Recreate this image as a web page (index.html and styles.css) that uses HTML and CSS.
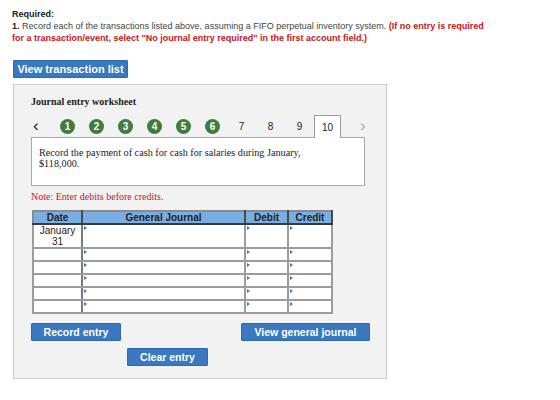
FILE: index.html
```html
<!DOCTYPE html>
<html lang="en">
<head>
    <meta charset="UTF-8">
    <title>Journal entry worksheet</title>
    <link rel="stylesheet" href="styles.css">
</head>
<body>
    <div class="required">
        <div class="req-title">Required:</div>
        <p><b>1.</b> Record each of the transactions listed above, assuming a FIFO perpetual inventory system. <span class="req-note">(If no entry is required</span><br><span class="req-note">for a transaction/event, select "No journal entry required" in the first account field.)</span></p>
    </div>

    <button class="btn btn-list">View transaction list</button>

    <div class="worksheet">
        <div class="ws-title">Journal entry worksheet</div>

        <div class="steps">
            <span class="step-arrow prev">&lsaquo;</span>
            <span class="step"><span class="dot">1</span></span>
            <span class="step"><span class="dot">2</span></span>
            <span class="step"><span class="dot">3</span></span>
            <span class="step"><span class="dot">4</span></span>
            <span class="step"><span class="dot">5</span></span>
            <span class="step"><span class="dot">6</span></span>
            <span class="step">7</span>
            <span class="step">8</span>
            <span class="step">9</span>
            <span class="step step-active">10</span>
            <span class="step-arrow next">&rsaquo;</span>
        </div>

        <div class="desc">
            Record the payment of cash for cash for salaries during January, $118,000.
        </div>

        <div class="note">Note: Enter debits before credits.</div>

        <table class="journal">
            <thead>
                <tr>
                    <th class="col-date">Date</th>
                    <th class="col-account">General Journal</th>
                    <th class="col-debit">Debit</th>
                    <th class="col-credit">Credit</th>
                </tr>
            </thead>
            <tbody>
                <tr class="first-row">
                    <td class="date">January<br>31</td>
                    <td class="entry"></td>
                    <td class="entry"></td>
                    <td class="entry"></td>
                </tr>
                <tr><td class="date"></td><td class="entry"></td><td class="entry"></td><td class="entry"></td></tr>
                <tr><td class="date"></td><td class="entry"></td><td class="entry"></td><td class="entry"></td></tr>
                <tr><td class="date"></td><td class="entry"></td><td class="entry"></td><td class="entry"></td></tr>
                <tr><td class="date"></td><td class="entry"></td><td class="entry"></td><td class="entry"></td></tr>
                <tr><td class="date"></td><td class="entry"></td><td class="entry"></td><td class="entry"></td></tr>
            </tbody>
        </table>

        <div class="actions">
            <button class="btn btn-record">Record entry</button>
            <button class="btn btn-journal">View general journal</button>
        </div>
        <div class="actions-clear">
            <button class="btn btn-clear">Clear entry</button>
        </div>
    </div>
</body>
</html>
```

FILE: styles.css
```css
body {
    margin: 0;
    font-family: 'Liberation Sans', Arial, sans-serif;
    color: #333;
    background: #fff;
}

.required {
    width: 480px;
    padding: 8px 12px 0 12px;
    font-size: 9px;
    line-height: 12px;
}

.req-title {
    font-weight: bold;
    color: #222;
}

.required p {
    margin: 0;
    color: #444;
}

.required p b {
    color: #222;
}

.req-note {
    color: #c4161c;
    font-weight: bold;
}

.btn {
    font-family: 'Liberation Sans', Arial, sans-serif;
    font-weight: bold;
    font-size: 10.5px;
    color: white;
    background-color: #3a78bf;
    border: 1px solid #2f6aad;
    border-radius: 1px;
    padding: 0;
    height: 18px;
    cursor: pointer;
}

.btn-list {
    display: block;
    margin: 16px 0 0 13px;
    width: 115px;
    font-size: 11px;
}

.worksheet {
    margin: 6px 0 0 13px;
    width: 355px;
    height: 283px;
    padding: 10px 0 0 17px;
    background-color: #f2f2f2;
    border: 1px solid #cfcfcf;
    font-family: 'Liberation Serif', 'Times New Roman', serif;
}

.ws-title {
    font-weight: bold;
    font-size: 10px;
    line-height: 14px;
    color: #222;
}

.steps {
    display: flex;
    align-items: center;
    height: 22px;
    margin-top: 6px;
    font-family: 'Liberation Sans', Arial, sans-serif;
    font-size: 10px;
    color: #222;
}

.step-arrow {
    font-size: 17px;
    line-height: 22px;
}

.prev {
    width: 22px;
    padding-left: 2px;
    box-sizing: border-box;
    color: #222;
}

.next {
    margin-left: 19px;
    color: #aaa;
}

.step {
    width: 29px;
    height: 22px;
    display: flex;
    align-items: center;
    justify-content: center;
}

.dot {
    width: 15px;
    height: 15px;
    border-radius: 50%;
    background-color: #3e7d3c;
    color: white;
    font-weight: bold;
    font-size: 10px;
    display: flex;
    align-items: center;
    justify-content: center;
}

.step-active {
    width: 27px;
    box-sizing: border-box;
    background: white;
    border: 1px solid #9a9a9a;
    border-bottom: none;
    position: relative;
    z-index: 1;
    margin-bottom: -1px;
    height: 23px;
    padding-top: 1px;
}

.desc {
    width: 334px;
    height: 49px;
    box-sizing: border-box;
    background: white;
    border: 1px solid #a8a8a8;
    padding: 9px 40px 0 7px;
    font-size: 10.2px;
    line-height: 11px;
    color: #222;
}

.note {
    margin-top: 5px;
    font-size: 10px;
    line-height: 12px;
    color: #c4161c;
}

.journal {
    margin-top: 7px;
    margin-left: 1px;
    border-collapse: collapse;
    width: 301px;
    table-layout: fixed;
    font-family: 'Liberation Sans', Arial, sans-serif;
}

.journal th {
    background-color: #7aaee2;
    font-size: 10px;
    font-weight: bold;
    color: #222;
    height: 11px;
    line-height: 11px;
    padding: 0;
    border: 2px solid #8a8a8a;
    border-bottom-color: #3a3a3a;
    border-right-color: #4a4a4a;
}

.journal td {
    background: white;
    border: 2px solid #9c9c9c;
    height: 11px;
    padding: 0;
    vertical-align: top;
}

.col-date { width: 47px; }
.col-debit { width: 41px; }
.col-credit { width: 42px; }

.journal td.date {
    border-right-color: #7a7a7a;
    font-size: 10px;
    line-height: 11px;
    text-align: center;
    color: #222;
}

.first-row td {
    height: 22px;
}

/* small blue marker at the start of each input cell */
.entry::before {
    content: '';
    display: block;
    width: 0;
    height: 0;
    margin: 1px 0 0 1px;
    border-left: 3px solid #3a78bf;
    border-top: 2px solid transparent;
    border-bottom: 2px solid transparent;
}

.actions {
    display: flex;
    justify-content: space-between;
    width: 339px;
    margin-top: 9px;
}

.btn-record {
    width: 90px;
}

.btn-journal {
    width: 129px;
}

.actions-clear {
    margin: 6px 0 0 96px;
}

.btn-clear {
    width: 81px;
}
```
